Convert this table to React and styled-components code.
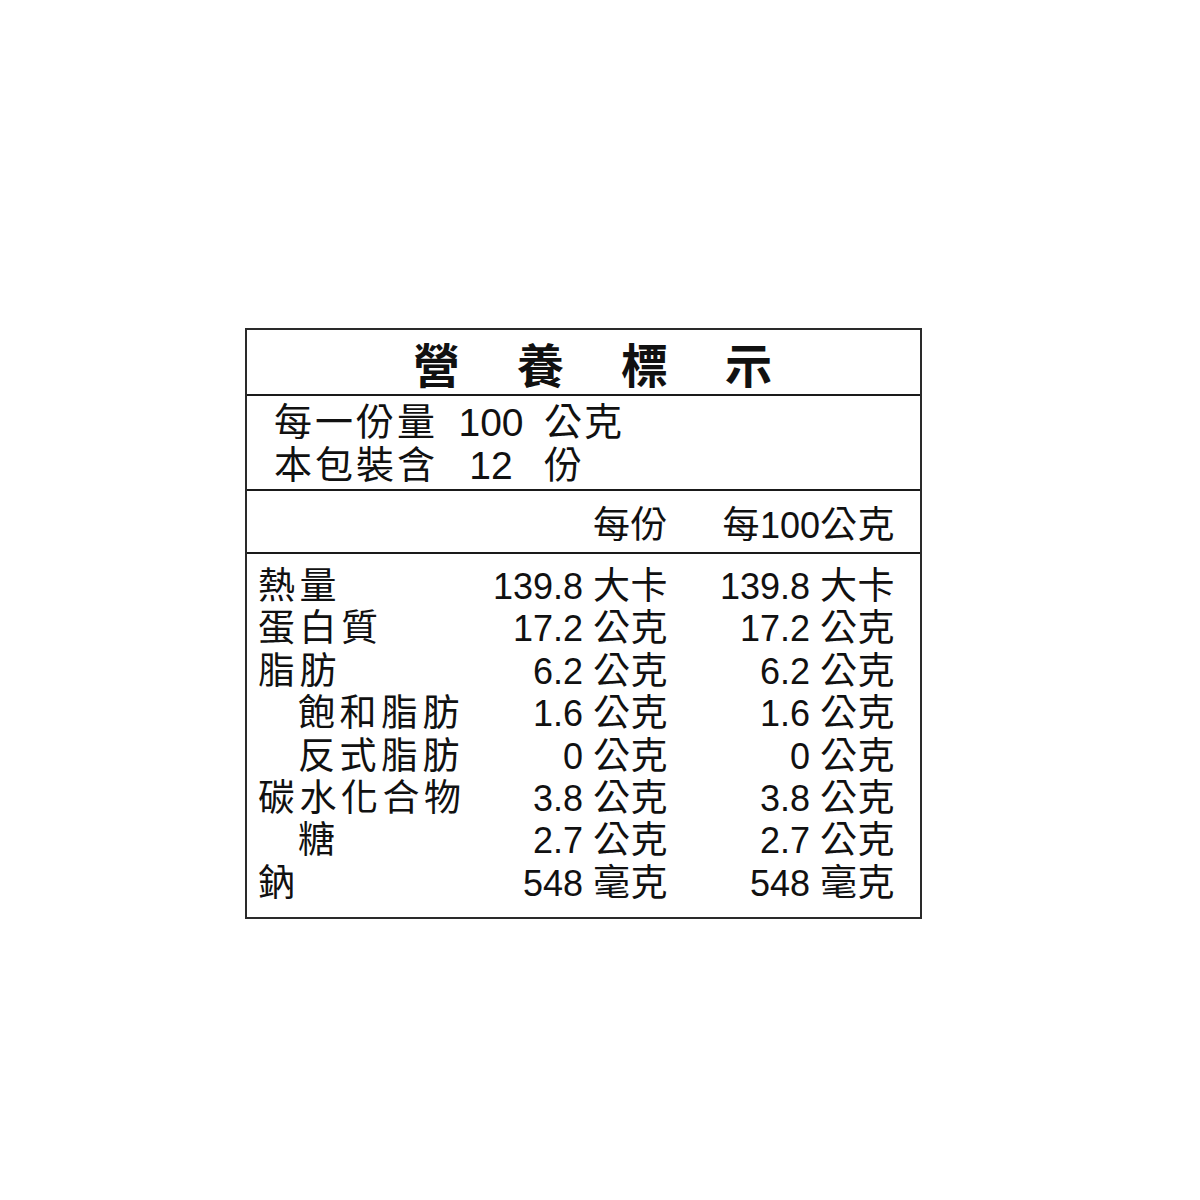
import React from "react";
import styled, { createGlobalStyle } from "styled-components";

const GlobalStyle = createGlobalStyle`
    html, body {
        margin: 0;
        padding: 0;
        background: #fff;
    }
    body {
        font-family: "Liberation Sans", "Noto Sans CJK TC", sans-serif;
        color: #111;
    }
`;

const nutrients = [
    { name: "熱量", sub: false, per: "139.8", per100: "139.8", unit: "大卡" },
    { name: "蛋白質", sub: false, per: "17.2", per100: "17.2", unit: "公克" },
    { name: "脂肪", sub: false, per: "6.2", per100: "6.2", unit: "公克" },
    { name: "飽和脂肪", sub: true, per: "1.6", per100: "1.6", unit: "公克" },
    { name: "反式脂肪", sub: true, per: "0", per100: "0", unit: "公克" },
    { name: "碳水化合物", sub: false, per: "3.8", per100: "3.8", unit: "公克" },
    { name: "糖", sub: true, per: "2.7", per100: "2.7", unit: "公克" },
    { name: "鈉", sub: false, per: "548", per100: "548", unit: "毫克" },
];

const App = () => {
    return (
        <Page>
            <GlobalStyle />
            <Label>
                <Title>
                    {"營養標示".split("").map((c) => (
                        <span key={c}>{c}</span>
                    ))}
                </Title>

                <Serving>
                    <ServLabel>每一份量</ServLabel>
                    <ServNum>100</ServNum>
                    <ServUnit>公克</ServUnit>
                    <ServLabel>本包裝含</ServLabel>
                    <ServNum>12</ServNum>
                    <ServUnit>份</ServUnit>
                </Serving>

                <Header>
                    <span />
                    <Cell>
                        <Unit>每份</Unit>
                    </Cell>
                    <Cell>
                        <Unit>每</Unit>
                        <Num>100</Num>
                        <Unit>公克</Unit>
                    </Cell>
                </Header>

                <Data>
                    {nutrients.map((n) => (
                        <Row key={n.name}>
                            <Name sub={n.sub ? 1 : 0}>{n.name}</Name>
                            <Cell>
                                <Num>{n.per} </Num>
                                <Unit>{n.unit}</Unit>
                            </Cell>
                            <Cell>
                                <Num>{n.per100} </Num>
                                <Unit>{n.unit}</Unit>
                            </Cell>
                        </Row>
                    ))}
                </Data>
            </Label>
        </Page>
    );
};

const Page = styled.div`
    padding-top: 328px;
    padding-left: 245px;
    min-height: 1200px;
    box-sizing: border-box;
`;

const Label = styled.div`
    width: 677px;
    box-sizing: border-box;
    border: 2px solid #2a2a2a;
    display: flex;
    flex-direction: column;
`;

const Title = styled.div`
    height: 64px;
    display: flex;
    align-items: center;
    justify-content: center;
    gap: 57px;
    padding-left: 18px;
    font-size: 47px;
    font-weight: 700;
    border-bottom: 2px solid #1a1a1a;
`;

const Serving = styled.div`
    height: 95px;
    box-sizing: border-box;
    display: grid;
    grid-template-columns: 174px 86px auto;
    grid-auto-rows: 43px;
    align-items: center;
    align-content: start;
    padding: 5px 0 0 27px;
    line-height: 43px;
    border-bottom: 2px solid #1a1a1a;
    overflow: hidden;
`;

const ServLabel = styled.span`
    font-size: 38px;
    letter-spacing: 3px;
`;

const ServNum = styled.span`
    font-size: 39px;
    text-align: center;
`;

const ServUnit = styled.span`
    font-size: 38px;
    letter-spacing: 2px;
    margin-left: 10px;
`;

const Num = styled.span`
    font-size: 36px;
    white-space: pre;
`;

const Unit = styled.span`
    font-size: 37px;
    letter-spacing: 0.5px;
`;

const Header = styled.div`
    height: 61px;
    display: grid;
    grid-template-columns: 210px 200px 227px;
    align-items: center;
    padding-left: 11px;
    border-bottom: 2px solid #1a1a1a;
`;

const Cell = styled.div`
    text-align: right;
    white-space: nowrap;
`;

const Data = styled.div`
    padding: 12px 0 12px 11px;
`;

const Row = styled.div`
    display: grid;
    grid-template-columns: 210px 200px 227px;
    align-items: baseline;
    height: 42.4px;
    line-height: 42.4px;
`;

const Name = styled.span`
    font-size: 37px;
    letter-spacing: 4.5px;
    padding-left: ${(p) => (p.sub ? "40px" : "0")};
    white-space: nowrap;
`;

export default App;
